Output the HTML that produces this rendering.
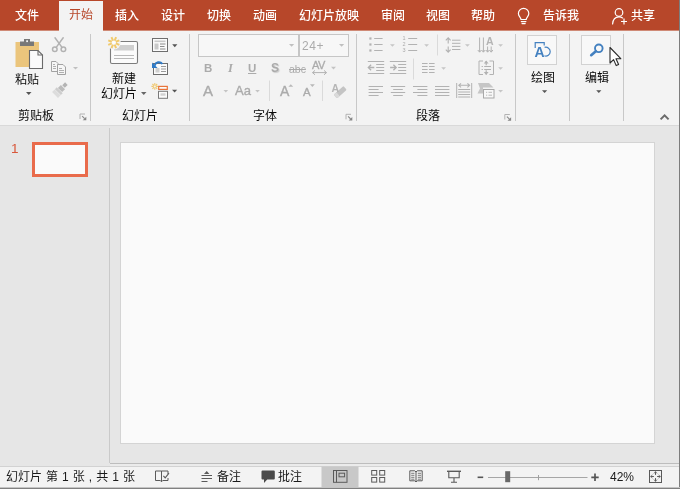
<!DOCTYPE html>
<html lang="zh-CN">
<head>
<meta charset="utf-8">
<title>PowerPoint</title>
<style>
html,body{margin:0;padding:0;}
body{width:680px;height:489px;overflow:hidden;position:relative;background:#e6e6e6;
 font-family:"Liberation Sans","Noto Sans CJK SC",sans-serif;font-size:12px;color:#262626;}
#app{position:absolute;left:0;top:0;width:680px;height:489px;overflow:hidden;will-change:transform;}
#app div,#app span,#app svg{position:absolute;}
#ribbon .dis,#ribbon .lbl,#ribbon .ztop{z-index:2;}
#tabs{left:0;top:0;width:680px;height:30px;background:#b7472a;border-bottom:1px solid #cf8a76;}
#tabs .t{top:2px;height:28px;line-height:29px;color:#fff;font-size:12px;white-space:nowrap;font-weight:500;}
#tabs .act{left:59px;top:1px;width:44px;height:30px;background:#f3f3f3;}
#tabs .act span{left:10px;top:0px;line-height:29px;color:#b7472a;white-space:nowrap;}
#ribbon{left:0;top:31px;width:680px;height:95px;background:#f3f3f3;border-bottom:1px solid #d9d9d9;box-sizing:border-box;}
.sep{width:1px;background:#c8c8c8;top:3px;height:87px;}
.lbl{font-size:12px;color:#0a0a0a;white-space:nowrap;line-height:14px;}
.dis{color:#ababab;white-space:nowrap;line-height:14px;}
#work{left:0;top:126px;width:680px;height:340px;background:#e6e6e6;}
#slide{left:120px;top:16px;width:535px;height:302px;background:#fafafa;border:1px solid #d4d4d4;box-sizing:border-box;}
#thumb{left:32px;top:16px;width:56px;height:35px;border:3px solid #e96b4b;background:#fafafa;box-sizing:border-box;}
#status{left:0;top:466px;width:680px;height:23px;background:#f3f3f3;border-top:1px solid #d2d2d2;box-sizing:border-box;}
#status .s{top:0;line-height:21px;font-size:12px;color:#1a1a1a;white-space:nowrap;}
#icons{left:0;top:0;width:680px;height:489px;}
</style>
</head>
<body>
<div id="app">
 <div id="tabs">
  <div class="t" style="left:15px">文件</div>
  <div class="act"><span>开始</span></div>
  <div class="t" style="left:115px">插入</div>
  <div class="t" style="left:161px">设计</div>
  <div class="t" style="left:207px">切换</div>
  <div class="t" style="left:253px">动画</div>
  <div class="t" style="left:299px">幻灯片放映</div>
  <div class="t" style="left:381px">审阅</div>
  <div class="t" style="left:426px">视图</div>
  <div class="t" style="left:471px">帮助</div>
  <div class="t" style="left:543px">告诉我</div>
  <div class="t" style="left:631px">共享</div>
 </div>
 <div id="ribbon">
  <div class="sep" style="left:90px"></div>
  <div class="sep" style="left:189px"></div>
  <div class="sep" style="left:356px"></div>
  <div class="sep" style="left:515px"></div>
  <div class="sep" style="left:569px"></div>
  <div class="sep" style="left:623px"></div>
  <div class="lbl" style="left:15px;top:42px">粘贴</div>
  <div class="lbl" style="left:18px;top:78px">剪贴板</div>
  <div class="lbl" style="left:112px;top:41px">新建</div>
  <div class="lbl" style="left:101px;top:56px">幻灯片</div>
  <div class="lbl" style="left:122px;top:78px">幻灯片</div>
  <div class="lbl" style="left:253px;top:78px">字体</div>
  <div class="lbl" style="left:416px;top:78px">段落</div>
  <div class="lbl" style="left:531px;top:40px">绘图</div>
  <div class="lbl" style="left:585px;top:40px">编辑</div>
  <div class="dis" style="left:302px;top:8px;font-size:12px;letter-spacing:0.6px">24+</div>
  <div class="dis" style="left:204px;top:30px;font-size:11.5px;font-weight:bold">B</div>
  <div class="dis" style="left:228px;top:30px;font-size:12.5px;font-style:italic;font-weight:bold;font-family:'Liberation Serif',serif">I</div>
  <div class="dis" style="left:248px;top:30px;font-size:11.5px;font-weight:bold;text-decoration:underline">U</div>
  <div class="dis" style="left:271px;top:30px;font-size:12px;font-weight:bold;text-shadow:1px 1px 1px #ccc">S</div>
  <div class="dis" style="left:289px;top:31px;font-size:10.5px;text-decoration:line-through">abc</div>
  <div class="dis" style="left:312px;top:27px;font-size:11px;letter-spacing:-0.5px;-webkit-text-stroke:0.3px #ababab">AV</div>
  <div class="dis" style="left:203px;top:52px;font-size:15px;line-height:16px;-webkit-text-stroke:0.35px #ababab">A</div>
  <div class="dis" style="left:235px;top:53px;font-size:13px;line-height:14px;-webkit-text-stroke:0.35px #ababab">Aa</div>
  <div class="dis" style="left:280px;top:53px;font-size:14px;line-height:14px;-webkit-text-stroke:0.35px #ababab">A</div>
  <div class="dis" style="left:303px;top:55px;font-size:11.5px;line-height:12px;-webkit-text-stroke:0.35px #ababab">A</div>
  <div class="dis" style="left:331.5px;top:51px;font-size:10.5px;line-height:12px;font-weight:bold;color:#b6b6b6">A</div>
  <div class="dis" style="left:402.5px;top:4px;font-size:5.5px;line-height:6px;width:4px">1<br>2<br>3</div>
  <div class="dis" style="left:486px;top:5px;font-size:10.5px;line-height:11px;font-weight:bold;color:#b4b4b4">A</div>
  <div class="ztop" style="left:534.5px;top:14px;font-size:14px;line-height:14px;font-weight:bold;color:#4481c0">A</div>
 </div>
 <div id="work">
  <div style="left:109px;top:2px;width:1px;height:335px;background:#cacaca"></div>
  <div style="left:110px;top:337px;width:570px;height:1px;background:#bdbdbd"></div>
  <div style="left:110px;top:338px;width:570px;height:2px;background:#ebebeb"></div>
  <div style="left:11px;top:16px;color:#d9573a;font-size:13.5px;line-height:14px">1</div>
  <div id="thumb"></div>
  <div id="slide"></div>
 </div>
 <div id="status">
  <div class="s" style="left:6px;word-spacing:0.7px">幻灯片 第 1 张 , 共 1 张</div>
  <div class="s" style="left:217px">备注</div>
  <div class="s" style="left:278px">批注</div>
  <div class="s" style="left:610px">42%</div>
 </div>
 <svg id="icons" width="680" height="489" viewBox="0 0 680 489">
<g fill="none" stroke="#fff" stroke-width="1.2" stroke-linecap="round"><path d="M521,19.5c0,-2 -2.6,-3 -2.6,-6a5.2,5.2 0 0 1 10.4,0c0,3 -2.6,4 -2.6,6z"/><path d="M521.3,21.6h4.6M522,23.6h3.2"/></g>
<g fill="none" stroke="#fff" stroke-width="1.2"><circle cx="619" cy="12.5" r="3.8"/><path d="M612.6,24c0.3,-4.5 2.8,-7.2 6.4,-7.2c1.4,0 2.6,0.4 3.6,1.1" stroke-linecap="round"/><path d="M621,21.5h6M624,18.5v6"/></g>
<rect x="15.5" y="42" width="23.5" height="25" fill="#ebc57c"/>
<path d="M20,41.5h4v-2.5h6v2.5h4v4.5h-14z" fill="#787878"/>
<rect x="26.2" y="40.3" width="1.8" height="1.8" fill="#f3f3f3"/>
<path d="M29.5,50.5h8.5l4.5,4.5v13.5h-13z" fill="#fafafa" stroke="#6a6a6a" stroke-width="1.1"/>
<path d="M38,50.5v4.5h4.5" fill="none" stroke="#6a6a6a" stroke-width="1.1"/>
<path d="M26,92h5.5l-2.75,3z" fill="#555"/>
<g fill="none" stroke="#b2b2b2" stroke-width="1.5" stroke-linecap="round"><path d="M55,37.8l7,9.6M63.2,37.8l-7,9.6"/><circle cx="54.8" cy="49.3" r="2.3"/><circle cx="63.4" cy="49.3" r="2.3"/></g>
<g fill="#f6f6f6" stroke="#a2a2a2" stroke-width="1"><path d="M51.5,61.5h4.5l2,2v8h-6.5z"/><path d="M57.5,64.5h5.5l2.5,2.5v7.5h-8z"/></g>
<g stroke="#b0b0b0" stroke-width="1"><path d="M53,64.5h2M53,66.5h3M53,68.5h3M59,68.5h3M59,70.5h5M59,72.5h5"/></g>
<path d="M73,67h5l-2.5,2.6z" fill="#c0c0c0"/>
<g transform="translate(60,90) rotate(-45)" fill="#c8c8c8"><rect x="5" y="-1.8" width="4" height="3.6" fill="#b4b4b4"/><rect x="0" y="-3" width="4.2" height="6" fill="#bcbcbc"/><rect x="-3" y="-4.2" width="2.6" height="8.4" fill="#cdcdcd"/><rect x="-7" y="-4.2" width="3.6" height="8.4" fill="#dcdcdc"/></g>
<path d="M85.0,114.0h-5v5" fill="none" stroke="#b2b2b2" stroke-width="1"/><path d="M82.1,116.1l2.6,2.6" fill="none" stroke="#8a8a8a" stroke-width="1.1"/><path d="M86.3,116.7v3.6h-3.6z" fill="#868686"/>
<rect x="110.5" y="41.5" width="27" height="22" rx="1.5" fill="#fbfbfb" stroke="#7c7c7c" stroke-width="1.1"/>
<rect x="114" y="45" width="20" height="5.5" fill="#cfcfcf"/>
<path d="M114,55.5h20M114,58.5h20" stroke="#b9b9b9" stroke-width="1"/>
<circle cx="113.8" cy="42.6" r="7" fill="#f3f3f3"/>
<path d="M115.83,43.44L119.34,44.90M114.64,44.63L116.10,48.14M112.96,44.63L111.50,48.14M111.77,43.44L108.26,44.90M111.77,41.76L108.26,40.30M112.96,40.57L111.50,37.06M114.64,40.57L116.10,37.06M115.83,41.76L119.34,40.30" stroke="#f1ca6c" stroke-width="2" fill="none"/>
<circle cx="113.8" cy="42.6" r="1.6" fill="#fdfdfd"/>
<path d="M141,92h5.5l-2.75,3z" fill="#666"/>
<rect x="152.5" y="38.5" width="15" height="13" fill="#fbfbfb" stroke="#6e6e6e" stroke-width="1"/>
<rect x="154.5" y="40.5" width="11" height="1.6" fill="#c9c9c9"/>
<rect x="154.5" y="43.5" width="4" height="6" fill="#c9c9c9"/>
<path d="M160,44h5.5M160,46.5h4.5M160,49h5.5" stroke="#8c8c8c" stroke-width="1"/>
<path d="M172.2,44.3h5.2l-2.6,2.9z" fill="#555"/>
<rect x="153.5" y="63.5" width="14" height="11" fill="#fbfbfb" stroke="#6e6e6e" stroke-width="1"/>
<rect x="155.5" y="68" width="4" height="4.5" fill="#d0d0d0"/>
<path d="M161,66.5h5M161,69h5M161,71.5h5" stroke="#9a9a9a" stroke-width="1"/>
<path d="M152,62.4v5.6h5.6z" fill="#2f7ac6"/>
<path d="M154.6,65.6c1.2,-3.6 5.4,-4.6 7.8,-1.6" fill="none" stroke="#2f7ac6" stroke-width="2"/>
<path d="M155.80,86.40L158.20,86.40M155.51,87.11L157.20,88.80M154.80,87.40L154.80,89.80M154.09,87.11L152.40,88.80M153.80,86.40L151.40,86.40M154.09,85.69L152.40,84.00M154.80,85.40L154.80,83.00M155.51,85.69L157.20,84.00" stroke="#f0c870" stroke-width="1.1" fill="none"/>
<rect x="158.7" y="86.4" width="8.6" height="3" fill="#fbfbfb" stroke="#e8743a" stroke-width="1.2"/>
<rect x="158.5" y="91.3" width="9" height="7" fill="#fbfbfb" stroke="#7a7a7a" stroke-width="1"/>
<rect x="160.5" y="93.3" width="5" height="2.4" fill="#d2d2d2"/>
<path d="M172,89.7h5.2l-2.6,2.9z" fill="#555"/>
<rect x="198.5" y="34.5" width="100" height="22" fill="#f7f7f7" stroke="#c6c6c6" stroke-width="1"/>
<rect x="299.5" y="34.5" width="49" height="22" fill="#f7f7f7" stroke="#c6c6c6" stroke-width="1"/>
<path d="M289,44h5.2l-2.6,2.8z" fill="#c0c0c0"/>
<path d="M339,44h5.2l-2.6,2.8z" fill="#c0c0c0"/>
<path d="M312.5,72.6h14M315,70.4l-2.5,2.2l2.5,2.2M324,70.4l2.5,2.2l-2.5,2.2" fill="none" stroke="#b2b2b2" stroke-width="1"/>
<path d="M331,66.8h5l-2.5,2.7z" fill="#c4c4c4"/>
<path d="M223.5,90h4.6l-2.3,2.5z" fill="#c4c4c4"/>
<path d="M255.2,90h4.6l-2.3,2.5z" fill="#c4c4c4"/>
<path d="M269.5,80.5v20.5M322.5,80.5v20.5" stroke="#dadada" stroke-width="1"/>
<path d="M288.4,86.8h4.8l-2.4,-2.6z" fill="#b8b8b8"/>
<path d="M310,84.3h4.8l-2.4,2.6z" fill="#b8b8b8"/>
<g transform="translate(340.2,92.2) rotate(-42)"><rect x="-6.5" y="-2.5" width="13" height="5" rx="1" fill="#c4c4c4"/><rect x="-6.5" y="-2.5" width="3.6" height="5" rx="1" fill="#dadada"/></g>
<path d="M351.0,114.3h-5v5" fill="none" stroke="#b2b2b2" stroke-width="1"/><path d="M348.1,116.39999999999999l2.6,2.6" fill="none" stroke="#8a8a8a" stroke-width="1.1"/><path d="M352.3,117.0v3.6h-3.6z" fill="#868686"/>
<rect x="369.3" y="37.4" width="2.2" height="2.2" fill="#b2b2b2"/>
<path d="M374.2,38.5h8.4" stroke="#b2b2b2" stroke-width="1"/>
<path d="M408.2,38.5h9" stroke="#b2b2b2" stroke-width="1"/>
<rect x="369.3" y="43.4" width="2.2" height="2.2" fill="#b2b2b2"/>
<path d="M374.2,44.5h8.4" stroke="#b2b2b2" stroke-width="1"/>
<path d="M408.2,44.5h9" stroke="#b2b2b2" stroke-width="1"/>
<rect x="369.3" y="49.4" width="2.2" height="2.2" fill="#b2b2b2"/>
<path d="M374.2,50.5h8.4" stroke="#b2b2b2" stroke-width="1"/>
<path d="M408.2,50.5h9" stroke="#b2b2b2" stroke-width="1"/>
<path d="M390,44.2h4.8l-2.4,2.5z" fill="#c6c6c6"/>
<path d="M424.2,44.2h4.8l-2.4,2.5z" fill="#c6c6c6"/>
<path d="M367.8,61.5h16.4M367.8,73.5h16.4M376.2,64.5h8M376.2,67.5h8M376.2,70.5h8" stroke="#b2b2b2" stroke-width="1"/>
<path d="M374.3,67.5h-6M371.1,64.7l-2.8,2.8l2.8,2.8" fill="none" stroke="#b2b2b2" stroke-width="1.3"/>
<path d="M389.8,61.5h16.4M389.8,73.5h16.4M398.2,64.5h8M398.2,67.5h8M398.2,70.5h8" stroke="#b2b2b2" stroke-width="1"/>
<path d="M390.1,67.5h6M393.40000000000003,64.7l2.8,2.8l-2.8,2.8" fill="none" stroke="#b2b2b2" stroke-width="1.3"/>
<path d="M413.5,58.5v21M437.5,34.5v21" stroke="#dadada" stroke-width="1"/>
<path d="M422,63.5h5.6M429,63.5h5.6M422,66.5h5.6M429,66.5h5.6M422,69.5h5.6M429,69.5h5.6M422,72.5h5.6M429,72.5h5.6" stroke="#b2b2b2" stroke-width="1"/>
<path d="M441.2,67.2h4.8l-2.4,2.5z" fill="#c6c6c6"/>
<path d="M448.2,38v5.6M448.2,46.4v5.6M445.8,40.4l2.4,-2.6l2.4,2.6M445.8,49.6l2.4,2.6l2.4,-2.6" fill="none" stroke="#b2b2b2" stroke-width="1.1"/>
<path d="M452,40.2h8.4M452,43.3h8.4M452,46.4h8.4M452,49.5h8.4" stroke="#b2b2b2" stroke-width="1"/>
<path d="M465,44.2h4.8l-2.4,2.5z" fill="#c6c6c6"/>
<path d="M479.6,37.5v14.5M483.4,37.5v14.5M477.8,50l1.8,2.2l1.8,-2.2M481.6,50l1.8,2.2l1.8,-2.2M487.6,46.5v5.5M491.2,46.5v5.5M485.9,50l1.7,2.2l1.7,-2.2M489.5,50l1.7,2.2l1.7,-2.2" fill="none" stroke="#b2b2b2" stroke-width="1"/>
<path d="M498.2,44.2h4.8l-2.4,2.5z" fill="#c6c6c6"/>
<path d="M483,61h-4v13.5h4M489.5,61h4v13.5h-4" fill="none" stroke="#b2b2b2" stroke-width="1"/>
<path d="M486.2,61v4.2M486.2,74.5v-4.2" fill="none" stroke="#b2b2b2" stroke-width="1.2"/>
<path d="M483.8,63.4h4.8l-2.4,-3zM483.8,72.1h4.8l-2.4,3z" fill="#b2b2b2"/>
<path d="M481.6,66.5h1.3M484.2,66.5h6.8M481.6,69.5h1.3M484.2,69.5h6.8" stroke="#b2b2b2" stroke-width="1"/>
<path d="M498.2,67.2h4.8l-2.4,2.5z" fill="#c6c6c6"/>
<path d="M368.6,86.5h14.4M368.6,89.5h10M368.6,92.5h14.4M368.6,95.5h10" stroke="#b2b2b2" stroke-width="1"/>
<path d="M390.8,86.5h14.4M393.2,89.5h9.6M390.8,92.5h14.4M393.2,95.5h9.6" stroke="#b2b2b2" stroke-width="1"/>
<path d="M413,86.5h14.4M417.4,89.5h10M413,92.5h14.4M417.4,95.5h10" stroke="#b2b2b2" stroke-width="1"/>
<path d="M435,86.5h14.4M435,89.5h14.4M435,92.5h14.4M435,95.5h14.4" stroke="#b2b2b2" stroke-width="1"/>
<path d="M456.7,83v15M471.7,83v15" stroke="#b2b2b2" stroke-width="1"/>
<path d="M459,85.3h10.4M461,83.3l-2.2,2l2.2,2M467.4,83.3l2.2,2l-2.2,2" fill="none" stroke="#b2b2b2" stroke-width="1.1"/>
<path d="M458.2,89.5h12M458.2,92h12M458.2,94.5h12M458.2,97h12" stroke="#b2b2b2" stroke-width="1"/>
<path d="M478,83h11l4.5,4.5h-10.5v6h-5.5l2.5,-5z" fill="#c6c6c6"/>
<rect x="483.5" y="89.5" width="10.5" height="8.5" fill="#f8f8f8" stroke="#a8a8a8" stroke-width="1"/>
<path d="M486,92.3h1.2M488.5,92.3h3.5M486,95.2h1.2M488.5,95.2h3.5" stroke="#b8b8b8" stroke-width="1"/>
<path d="M498.2,90h4.8l-2.4,2.5z" fill="#c6c6c6"/>
<path d="M509.8,114.5h-5v5" fill="none" stroke="#b2b2b2" stroke-width="1"/><path d="M506.90000000000003,116.6l2.6,2.6" fill="none" stroke="#8a8a8a" stroke-width="1.1"/><path d="M511.1,117.2v3.6h-3.6z" fill="#868686"/>
<rect x="527.5" y="35.5" width="29" height="29" fill="#f8f8f8" stroke="#d2d2d2" stroke-width="1"/>
<rect x="581.5" y="35.5" width="29" height="29" fill="#f8f8f8" stroke="#d2d2d2" stroke-width="1"/>
<path d="M535.2,48v-5.4h9v3" fill="none" stroke="#4481c0" stroke-width="1.2"/>
<path d="M544.6,47.4a4.4,4.4 0 1 1 -0.2,8.4" fill="none" stroke="#4481c0" stroke-width="1.2"/>
<path d="M542,90.3h5.2l-2.6,2.8z" fill="#555"/>
<path d="M596.2,90.3h5.2l-2.6,2.8z" fill="#555"/>
<circle cx="598.8" cy="48.3" r="3.8" fill="none" stroke="#4481c0" stroke-width="1.9"/>
<path d="M595.8,51.2l-4.6,4" stroke="#4481c0" stroke-width="2.6" stroke-linecap="round"/>
<path d="M610,47.5v15.5l3.6,-3.4l2.6,6l2.4,-1.1l-2.6,-5.8h4.8z" fill="#fff" stroke="#2a2a2a" stroke-width="1.1" stroke-linejoin="round"/>
<path d="M660.6,119.4l4,-4l4,4" fill="none" stroke="#6a6a6a" stroke-width="2"/>
<path d="M161.5,481.8l-1.2,-1.3h-4.8v-9.5h6v10.5M161.5,471h6.5v3M161.5,481.8l1.2,-1.3h5.3v-2.5" fill="none" stroke="#5a5a5a" stroke-width="1"/>
<path d="M163.4,475.8l1.8,2l3.8,-4.6" fill="none" stroke="#5a5a5a" stroke-width="1.1"/>
<path d="M204,474h5.4l-2.7,-3z" fill="#5a5a5a"/>
<path d="M201.5,475.5h10.5M201.5,478.5h10.5M201.5,481.5h6" stroke="#5a5a5a" stroke-width="1"/>
<path d="M262.5,470.5h11.3q1,0 1,1v7q0,1 -1,1h-6.6l-3.2,3.4v-3.4h-1.5q-1,0 -1,-1v-7q0,-1 1,-1z" fill="#4a4a4a"/>
<rect x="321.5" y="466.5" width="37" height="21" fill="#c8c8c8"/>
<rect x="333.5" y="470.5" width="13.5" height="11.8" fill="none" stroke="#5a5a5a" stroke-width="1"/>
<path d="M336.5,470.5v11.8" stroke="#5a5a5a" stroke-width="1"/>
<rect x="339" y="473.2" width="5.6" height="3.6" fill="none" stroke="#5a5a5a" stroke-width="1"/>
<rect x="371.7" y="470.5" width="5" height="4.6" fill="none" stroke="#5a5a5a" stroke-width="1"/>
<rect x="379.7" y="470.5" width="5" height="4.6" fill="none" stroke="#5a5a5a" stroke-width="1"/>
<rect x="371.7" y="477.5" width="5" height="4.6" fill="none" stroke="#5a5a5a" stroke-width="1"/>
<rect x="379.7" y="477.5" width="5" height="4.6" fill="none" stroke="#5a5a5a" stroke-width="1"/>
<path d="M416,472l-1.2,-1.2h-5v10h5l1.2,1.2l1.2,-1.2h5v-10h-5zM416,472v10" fill="none" stroke="#5a5a5a" stroke-width="1"/>
<path d="M411.2,473.3h3.2M411.2,475.3h3.2M411.2,477.3h3.2M411.2,479.2h3.2M417.8,473.3h3.2M417.8,475.3h3.2M417.8,477.3h3.2M417.8,479.2h3.2" stroke="#5a5a5a" stroke-width="0.8"/>
<path d="M447,471.3h14" stroke="#5a5a5a" stroke-width="1.4"/>
<path d="M448.8,472v5.8h10.4v-5.8M454,477.8v4M451,482.3h6" fill="none" stroke="#5a5a5a" stroke-width="1.1"/>
<path d="M477.6,477.3h5.6" stroke="#555" stroke-width="1.6"/>
<path d="M488,477.5h99.5" stroke="#a6a6a6" stroke-width="1"/>
<path d="M538.5,475v5.2" stroke="#a0a0a0" stroke-width="1"/>
<rect x="505.2" y="471.2" width="5" height="11" fill="#686868"/>
<path d="M591.3,477.3h7.4M595,473.6v7.4" stroke="#555" stroke-width="1.7"/>
<rect x="649.5" y="470.5" width="12" height="12" fill="none" stroke="#5a5a5a" stroke-width="1"/>
<path d="M655.5,471.5v3.4M655.5,481.5v-3.4M650.5,476.5h3.4M660.5,476.5h-3.4" stroke="#5a5a5a" stroke-width="1"/>
<path d="M654,473.4l1.5,-1.6l1.5,1.6M654,479.6l1.5,1.6l1.5,-1.6M652.4,475l-1.6,1.5l1.6,1.5M658.6,475l1.6,1.5l-1.6,1.5" fill="none" stroke="#5a5a5a" stroke-width="0.9"/>
 </svg>
 <div style="left:679px;top:0;width:1px;height:489px;background:#7d7d7d"></div>
 <div style="left:0;top:487px;width:680px;height:1px;background:#c4c4c4"></div>
 <div style="left:0;top:488px;width:680px;height:1px;background:#808080"></div>
</div>
</body>
</html>
